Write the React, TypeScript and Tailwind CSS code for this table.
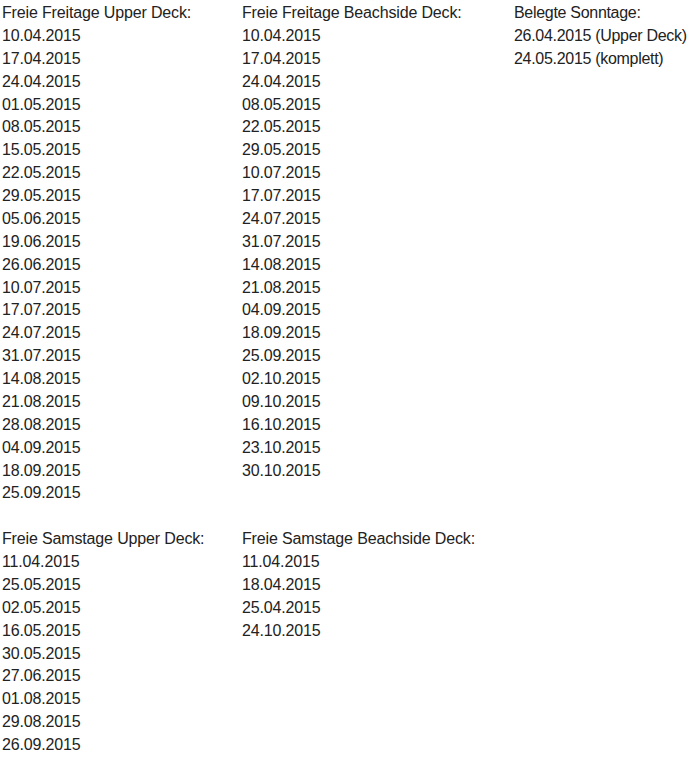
import React from "react";

const col1 = ["10.04","17.04","24.04","01.05","08.05","15.05","22.05","29.05","05.06","19.06","26.06","10.07","17.07","24.07","31.07","14.08","21.08","28.08","04.09","18.09","25.09"];
const col2 = ["10.04","17.04","24.04","08.05","22.05","29.05","10.07","17.07","24.07","31.07","14.08","21.08","04.09","18.09","25.09","02.10","09.10","16.10","23.10","30.10"];
const sat1 = ["11.04","25.05","02.05","16.05","30.05","27.06","01.08","29.08","26.09"];
const sat2 = ["11.04","18.04","25.04","24.10"];

function Col({ title, items, className }: { title: string; items: string[]; className?: string }) {
  return (
    <div className={className}>
      <div className="whitespace-nowrap">{title}</div>
      {items.map((d, i) => (
        <div key={i} className="whitespace-nowrap">{d}</div>
      ))}
    </div>
  );
}

export default function App() {
  return (
    <div
      className="bg-white text-[#222222] text-[16px] leading-[22.875px] tracking-[-0.15px] pl-[2px] pt-[2px] h-[757px] overflow-hidden"
      style={{ fontFamily: '"Liberation Sans", Arial, sans-serif' }}
    >
      <div className="flex">
        <Col className="w-[240px] shrink-0" title="Freie Freitage Upper Deck:" items={col1.map((d) => d + ".2015")} />
        <Col className="w-[272px] shrink-0" title="Freie Freitage Beachside Deck:" items={col2.map((d) => d + ".2015")} />
        <Col className="tracking-[-0.3px]" title="Belegte Sonntage:" items={["26.04.2015 (Upper Deck)", "24.05.2015 (komplett)"]} />
      </div>
      <div className="h-[22.875px]" />
      <div className="flex">
        <Col className="w-[240px] shrink-0" title="Freie Samstage Upper Deck:" items={sat1.map((d) => d + ".2015")} />
        <Col className="w-[272px] shrink-0" title="Freie Samstage Beachside Deck:" items={sat2.map((d) => d + ".2015")} />
      </div>
    </div>
  );
}
